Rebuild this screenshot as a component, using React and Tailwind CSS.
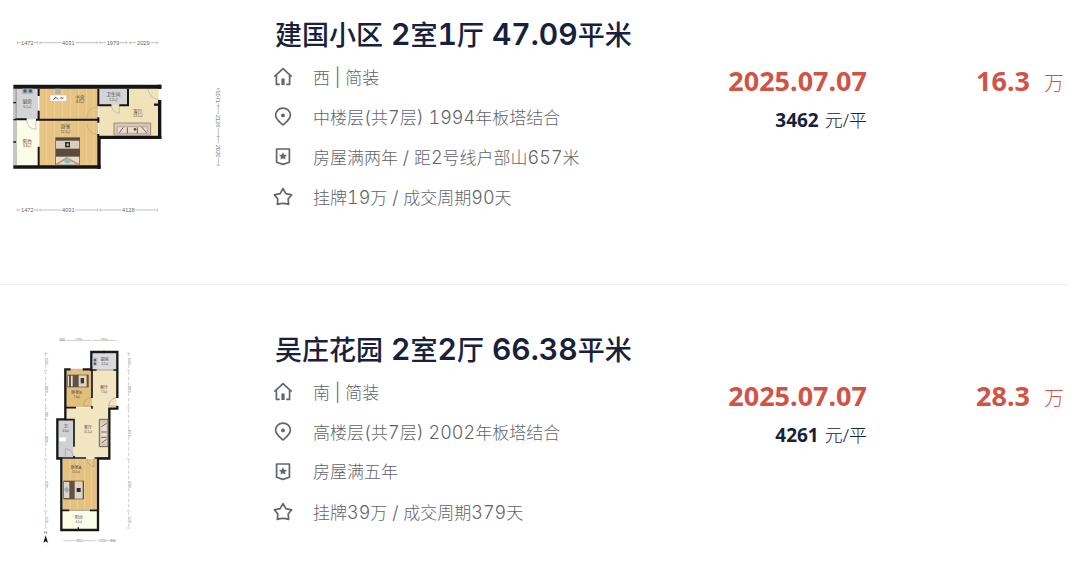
import React from "react";

const HOUSES = [
  {
    id: 1,
    title: "建国小区 2室1厅 47.09平米",
    decoration: "西 | 简装",
    floor: "中楼层(共7层) 1994年板塔结合",
    tags: "房屋满两年 / 距2号线户部山657米",
    deal: "挂牌19万 / 成交周期90天",
    date: "2025.07.07",
    unitPrice: "3462",
    total: "16.3",
    plan: "wide",
  },
  {
    id: 2,
    title: "吴庄花园 2室2厅 66.38平米",
    decoration: "南 | 简装",
    floor: "高楼层(共7层) 2002年板塔结合",
    tags: "房屋满五年",
    deal: "挂牌39万 / 成交周期379天",
    date: "2025.07.07",
    unitPrice: "4261",
    total: "28.3",
    plan: "tall",
  },
];

const Icon = ({ children }) => (
  <svg
    viewBox="0 0 20 20"
    className="h-5 w-5 shrink-0 text-[#62666b]"
    fill="none"
    stroke="currentColor"
    strokeWidth="1.7"
    strokeLinejoin="round"
    aria-hidden="true"
  >
    {children}
  </svg>
);

const HomeIcon = () => (
  <Icon>
    <path d="M1.4 9.6 L10 1.6 L18.6 9.6" />
    <path d="M3.4 8.2 V17.4 H6.8 M16.6 8.2 V17.4 H13.2" />
    <path d="M8.4 11.5 H11.6 V18 H8.4 Z" fill="currentColor" stroke="none" />
  </Icon>
);

const PinIcon = () => (
  <Icon>
    <path d="M10 18 C7 15.2 2.6 12.4 2.6 8.3 A7.4 7.2 0 0 1 17.4 8.3 C17.4 12.4 13 15.2 10 18 Z" />
    <circle cx="10" cy="8.4" r="1.9" fill="currentColor" stroke="none" />
  </Icon>
);

const BadgeIcon = () => (
  <Icon>
    <path d="M3.6 2 H16.4 V15.2 L10 17.4 L3.6 15.2 Z" />
    <path
      d="M10 5.2 L11.2 7.7 L14 8 L12 9.9 L12.5 12.6 L10 11.2 L7.5 12.6 L8 9.9 L6 8 L8.8 7.7 Z"
      fill="currentColor"
      stroke="none"
    />
  </Icon>
);

const StarIcon = () => (
  <Icon>
    <path d="M10 1.6 L12.9 6.6 L18.6 7.8 L15.2 12 L15.6 17.4 Q10 15.2 4.4 17.4 L4.8 12 L1.4 7.8 L7.1 6.6 Z" />
  </Icon>
);

// room name with its area below
const Room = ({ x, y, name, area, size = 14 }) => (
  <g textAnchor="middle" fill="#4a4238">
    <text x={x} y={y} fontSize={size}>{name}</text>
    <text x={x} y={y + size} fontSize={size - 4}>{area}</text>
  </g>
);

const planFont =
  "h-60 w-60 shrink-0 font-['Liberation_Sans','Noto_Sans_CJK_SC',sans-serif]";

const WidePlan = () => (
  <svg viewBox="0 -60 720 720" className={planFont} role="img" aria-label="户型图">
    <g stroke="#a5a5a5" strokeWidth="2">
      <path d="M52 68 H62 M102 68 H112 M118 68 H184 M226 68 H292 M298 68 H318 M360 68 H380 M388 68 H408 M452 68 H472" />
      <path d="M52 570 H62 M102 570 H112 M118 570 H184 M226 570 H292 M298 570 H364 M406 570 H472" />
      <path d="M52 64 V72 M112 64 V72 M120 64 V72 M292 64 V72 M300 64 V72 M380 64 V72 M390 64 V72 M472 64 V72" />
      <path d="M52 566 V574 M112 566 V574 M120 566 V574 M292 566 V574 M300 566 V574 M472 566 V574" />
      <path d="M655 206 V212 M655 250 V282 M655 324 V370 M655 414 V436 M650 206 H660 M650 258 H660 M650 350 H660 M650 436 H660" />
    </g>
    <g fill="#666" fontSize="17" textAnchor="middle">
      <text x="82" y="74">1472</text>
      <text x="205" y="74">4031</text>
      <text x="339" y="74">1979</text>
      <text x="430" y="74">2029</text>
      <text x="82" y="576">1472</text>
      <text x="205" y="576">4031</text>
      <text x="385" y="576">4128</text>
      <text transform="translate(649 230) rotate(90)">1071</text>
      <text transform="translate(649 303) rotate(90)">2126</text>
      <text transform="translate(649 393) rotate(90)">2020</text>
    </g>

    <path d="M46 204 H114 V298 H46 Z" fill="#d3d4d6" />
    <path d="M46 300 H116 V438 H46 Z" fill="#fcfde9" />
    <path d="M118 204 H294 V438 H118 Z" fill="#e6c383" />
    <path d="M296 204 H476 V348 H296 Z" fill="#f1e3b9" />
    <path d="M298 204 H382 V254 H298 Z" fill="#d3d4d6" />
    <path
      d="M140 206 V436 M164 206 V436 M188 206 V436 M212 206 V436 M236 206 V436 M260 206 V436 M280 206 V436"
      stroke="#edd096"
      strokeWidth="3"
    />
    <g fill="none" stroke="#c4a574" strokeWidth="2">
      <path d="M294 260 A34 34 0 0 0 260 294 M294 344 A34 34 0 0 1 260 310" />
      <path d="M80 300 A28 28 0 0 0 108 328 V300 M334 254 A26 26 0 0 0 358 280 V254 M444 206 A34 34 0 0 0 474 238" stroke="#aaa" />
    </g>

    <g fill="none" stroke="#151515">
      <path d="M40 200 H484" strokeWidth="12" />
      <path d="M40 441 H302" strokeWidth="11" />
      <path d="M297 446 V352 H484" strokeWidth="10" />
      <path d="M479 356 V240 M479 194 V206" strokeWidth="10" />
      <path d="M462 254 H482" strokeWidth="7" />
      <path d="M46 298 H80 M108 299 H296 M116 206 V228 M116 272 V302 M116 380 V438 M295 206 V258 M295 292 V308 M295 342 V352 M384 206 V256 H358 M296 256 H334" strokeWidth="6" />
      <path d="M42 204 V440 M48 204 V440" strokeWidth="2" stroke="#55585a" />
      <path d="M40 248 H48 M40 299 H48 M40 366 H48" strokeWidth="4" />
    </g>

    <path d="M66 206 H100 V222 H66 Z" fill="#a9b6c4" />
    <circle cx="75" cy="213" r="5" fill="#4c5967" />
    <circle cx="91" cy="213" r="5" fill="#4c5967" />
    <path d="M166 206 H182 V222 H166 Z" fill="#b3b0b2" />
    <path d="M150 225 H200 V244 H150 Z" fill="#fafafa" stroke="#b9a88a" />
    <path d="M160 239 L168 232 L174 238 M181 234 H190" fill="none" stroke="#444" strokeWidth="3" />

    <path d="M166 352 H240 V436 H166 Z" fill="#5d4a3c" />
    <path d="M168 362 H238 V386 H168 Z" fill="#d8cfc2" />
    <path d="M168 410 H238 V434 H168 Z" fill="#e6dccb" />
    <path d="M168 434 L200 414 L238 434" fill="none" stroke="#bc986c" strokeWidth="5" />
    <path d="M190 424 L203 414 L217 424 L203 431 Z" fill="#8fb9c4" />
    <path d="M195 366 H210 V382 H195 Z" fill="#2e2b24" />
    <circle cx="203" cy="374" r="4" fill="#a7b28a" />

    <path d="M342 309 H452 V346 H342 Z" fill="#d9c6b5" stroke="#9a897a" strokeWidth="3" />
    <path d="M352 320 H442 V340 H352 Z" fill="#eaddd0" stroke="#a39283" strokeWidth="2" />
    <path d="M370 322 L358 338 M382 322 V340 M412 322 V340 M424 320 L440 338" stroke="#705d52" strokeWidth="3" />
    <circle cx="405" cy="328" r="4" fill="#604e4a" />

    <Room x={82} y={249} name="厨房" area="5.1㎡" />
    <Room x={240} y={236} name="书房" area="8.6㎡" />
    <Room x={340} y={228} name="卫生间" area="2.2㎡" />
    <Room x={414} y={278} name="客厅" area="13.1㎡" />
    <Room x={197} y={324} name="卧室" area="12.1㎡" />
    <Room x={82} y={368} name="阳台" area="6.6㎡" />
  </svg>
);

const TallPlan = () => (
  <svg viewBox="-90 -45 720 720" className={planFont} role="img" aria-label="户型图">
    <g stroke="#b5b5b5" strokeWidth="2">
      <path d="M88 31 H106 M110 31 H136 M156 31 H184 M188 31 H212 M232 31 H258" />
      <path d="M100 632 H138 M158 632 H196 M202 632 H210 M226 632 H258" />
      <path d="M47 68 V82 M47 104 V118 M47 124 V166 M47 188 V232 M47 236 V244 M47 262 V268 M47 274 V316 M47 338 V384 M47 390 V452 M47 474 V540 M47 546 V558 M47 580 V594" strokeDasharray="10 6" />
      <path d="M296 68 V82 M296 104 V118 M296 124 V166 M296 188 V232 M296 238 V298 M296 320 V384 M296 390 V452 M296 474 V540 M296 546 V558 M296 580 V594" strokeDasharray="10 6" />
      <path d="M42 70 H52 M42 121 H52 M42 234 H52 M42 268 H52 M42 387 H52 M42 543 H52 M42 594 H52 M291 70 H301 M291 121 H301 M291 234 H301 M291 387 H301 M291 543 H301 M291 594 H301" />
    </g>
    <g fill="#777" fontSize="9" textAnchor="middle">
      <text x="97" y="34">890</text>
      <text x="146" y="34">2280</text>
      <text x="222" y="34">2330</text>
      <text x="148" y="635">3810</text>
      <text x="218" y="635">1320</text>
      <text x="249" y="635">810</text>
      <text transform="translate(44 93) rotate(90)">1540</text>
      <text transform="translate(44 177) rotate(90)">3300</text>
      <text transform="translate(44 253) rotate(90)">980</text>
      <text transform="translate(44 327) rotate(90)">3430</text>
      <text transform="translate(44 463) rotate(90)">4730</text>
      <text transform="translate(44 569) rotate(90)">1570</text>
      <text transform="translate(293 93) rotate(90)">1540</text>
      <text transform="translate(293 177) rotate(90)">3300</text>
      <text transform="translate(293 309) rotate(90)">4510</text>
      <text transform="translate(293 463) rotate(90)">4730</text>
      <text transform="translate(293 569) rotate(90)">1570</text>
    </g>

    <path d="M186 120 H260 V234 H238 V384 H130 V270 H106 V234 H186 Z" fill="#f1e5c2" />
    <path d="M186 70 H260 V120 H186 Z" fill="#d8dadb" />
    <path d="M106 120 H186 V232 H106 Z" fill="#e3bf7d" />
    <path d="M84 270 H130 V382 H84 Z" fill="#d0d1d4" />
    <path d="M98 386 H200 V542 H98 Z" fill="#e4c17f" />
    <path d="M98 542 H200 V598 H98 Z" fill="#fcfde8" />
    <path d="M120 388 V540 M142 388 V540 M164 388 V540 M184 388 V540" stroke="#edd096" strokeWidth="3" />
    <g fill="none" stroke="#aa9b80" strokeWidth="2">
      <path d="M186 202 A27 27 0 0 0 160 228 H186 M264 202 A27 27 0 0 0 236 228 H264 M106 380 V356 A25 25 0 0 1 130 378 M170 384 A26 26 0 0 0 192 410 V384" />
    </g>

    <g fill="none" stroke="#191919">
      <path d="M184 124 V66 H262 V204 M262 228 V236 H238 V386 H204 V600 H94 V386 H82 V268 H106 V118 H122 M158 118 H186" strokeWidth="7" />
      <path d="M186 120 H200 M250 120 H262 M186 120 V204 M186 228 V236 M106 233 H138 M106 269 H132 V350 M132 378 V384 M82 384 H168 M194 384 H240 M96 541 H118 M180 541 H204" strokeWidth="5" />
      <path d="M122 118 H158 M200 120 H250 M118 541 H180" stroke="#888" strokeWidth="2" />
      <path d="M145 592 V602 M222 62 V70" strokeWidth="4" />
    </g>

    <path d="M188 82 H202 V108 H188 Z" fill="#b9c4d2" />
    <circle cx="195" cy="90" r="4" fill="#56616e" />
    <circle cx="195" cy="101" r="4" fill="#56616e" />

    <path d="M112 134 H176 V172 H112 Z" fill="#65503f" />
    <path d="M114 137 H128 V169 H114 Z" fill="#e7e1d8" />
    <path d="M146 136 H170 V170 H146 Z" fill="#ddd4c8" />
    <path d="M152 144 H162 V160 H152 Z" fill="#3c352d" />
    <path d="M120 136 V170" stroke="#43372d" strokeWidth="5" />

    <path d="M100 452 H162 V508 H100 Z" fill="#65503f" />
    <path d="M102 456 H118 V504 H102 Z" fill="#ded5c8" />
    <path d="M134 454 H158 V506 H134 Z" fill="#ddd4c8" />
    <path d="M102 478 L110 470 L118 480 L110 490 Z" fill="#88b2c0" />
    <path d="M140 474 H152 V486 H140 Z" fill="#2e2b24" />

    <path d="M208 268 H234 V350 H208 Z" fill="#d6c5b7" stroke="#6f625a" strokeWidth="3" />
    <path d="M214 280 H230 V338 H214 Z" fill="#eaddd0" />
    <path d="M214 290 L230 280 M214 306 H230 M214 322 H230 M216 338 L230 328" stroke="#6c5b51" strokeWidth="3" />
    <path d="M88 322 H108 V334 H88 Z" fill="#fff" />

    <Room x={224} y={94} name="厨房" area="4.2㎡" size={12} />
    <Room x={222} y={177} name="餐厅" area="7.3㎡" size={12} />
    <Room x={140} y={193} name="卧室B" area="7.4㎡" size={12} />
    <Room x={174} y={296} name="客厅" area="15.1㎡" size={12} />
    <Room x={107} y={295} name="卫" area="4.6㎡" size={12} />
    <Room x={138} y={418} name="卧室A" area="15.3㎡" size={12} />
    <Room x={146} y={567} name="阳台" area="4.9㎡" size={12} />

    <circle cx="47" cy="630" r="13" fill="none" stroke="#ddd" />
    <path d="M47 616 L54 638 L47 634 L40 638 Z" fill="#151515" />
    <path d="M44 611 V604 L50 611 V604" fill="none" stroke="#777" strokeWidth="2" />
  </svg>
);

// latin parts are set larger than the Chinese around them
const Mixed = ({ text, className }) =>
  text.split(/([0-9.()/| ]+)/).map((part, i) =>
    i % 2 ? (
      <span key={i} className={className}>
        {part}
      </span>
    ) : (
      part
    )
  );

const InfoRow = ({ icon, text }) => (
  <li className="flex h-10 items-center gap-5">
    {icon}
    <span className="pt-px whitespace-nowrap">
      <Mixed text={text} className="text-[18px] tabular-nums" />
    </span>
  </li>
);

const HouseItem = ({ house }) => (
  <li className="flex border-b border-[#eeeeee] pt-[30px] pb-11 first:pt-0 last:border-b-0">
    {house.plan === "wide" ? <WidePlan /> : <TallPlan />}

    <div className="min-w-0 flex-1 pt-3 pl-[33px]">
      <h2 className="h-[45px] pl-[2px] text-[27px] leading-[44px] font-medium whitespace-nowrap text-[#17213c]">
        <Mixed text={house.title} className="text-[30px] font-semibold tabular-nums" />
      </h2>
      <ul className="text-[17px] font-light text-[#5f6368]">
        <InfoRow icon={<HomeIcon />} text={house.decoration} />
        <InfoRow icon={<PinIcon />} text={house.floor} />
        <InfoRow icon={<BadgeIcon />} text={house.tags} />
        <InfoRow icon={<StarIcon />} text={house.deal} />
      </ul>
    </div>

    <div className="shrink-0 pt-[61px] text-right font-['Noto_Sans','Noto_Sans_CJK_SC',sans-serif]">
      <div className="h-[39px] text-[27px] leading-10 font-bold text-[#d05445]">
        {house.date}
      </div>
      <div className="flex items-baseline justify-end gap-[6px] leading-10 text-[#17213c]">
        <span className="text-[19px] font-bold">{house.unitPrice}</span>
        <span className="text-[18px] font-light">元/平</span>
      </div>
    </div>

    <div className="flex h-[101px] w-[200px] shrink-0 items-baseline justify-end gap-[14px] pt-[61px] pr-[3px] font-['Noto_Sans','Noto_Sans_CJK_SC',sans-serif] leading-10 text-[#d05445]">
      <span className="text-[27px] font-bold">{house.total}</span>
      <span className="text-[20px] font-light">万</span>
    </div>
  </li>
);

const App = () => {
  return (
    <main className="min-h-screen bg-white pr-[13px] font-['Inter','Noto_Sans_CJK_SC',sans-serif]">
      <ul>
        {HOUSES.map((house) => (
          <HouseItem key={house.id} house={house} />
        ))}
      </ul>
    </main>
  );
};

export default App;
